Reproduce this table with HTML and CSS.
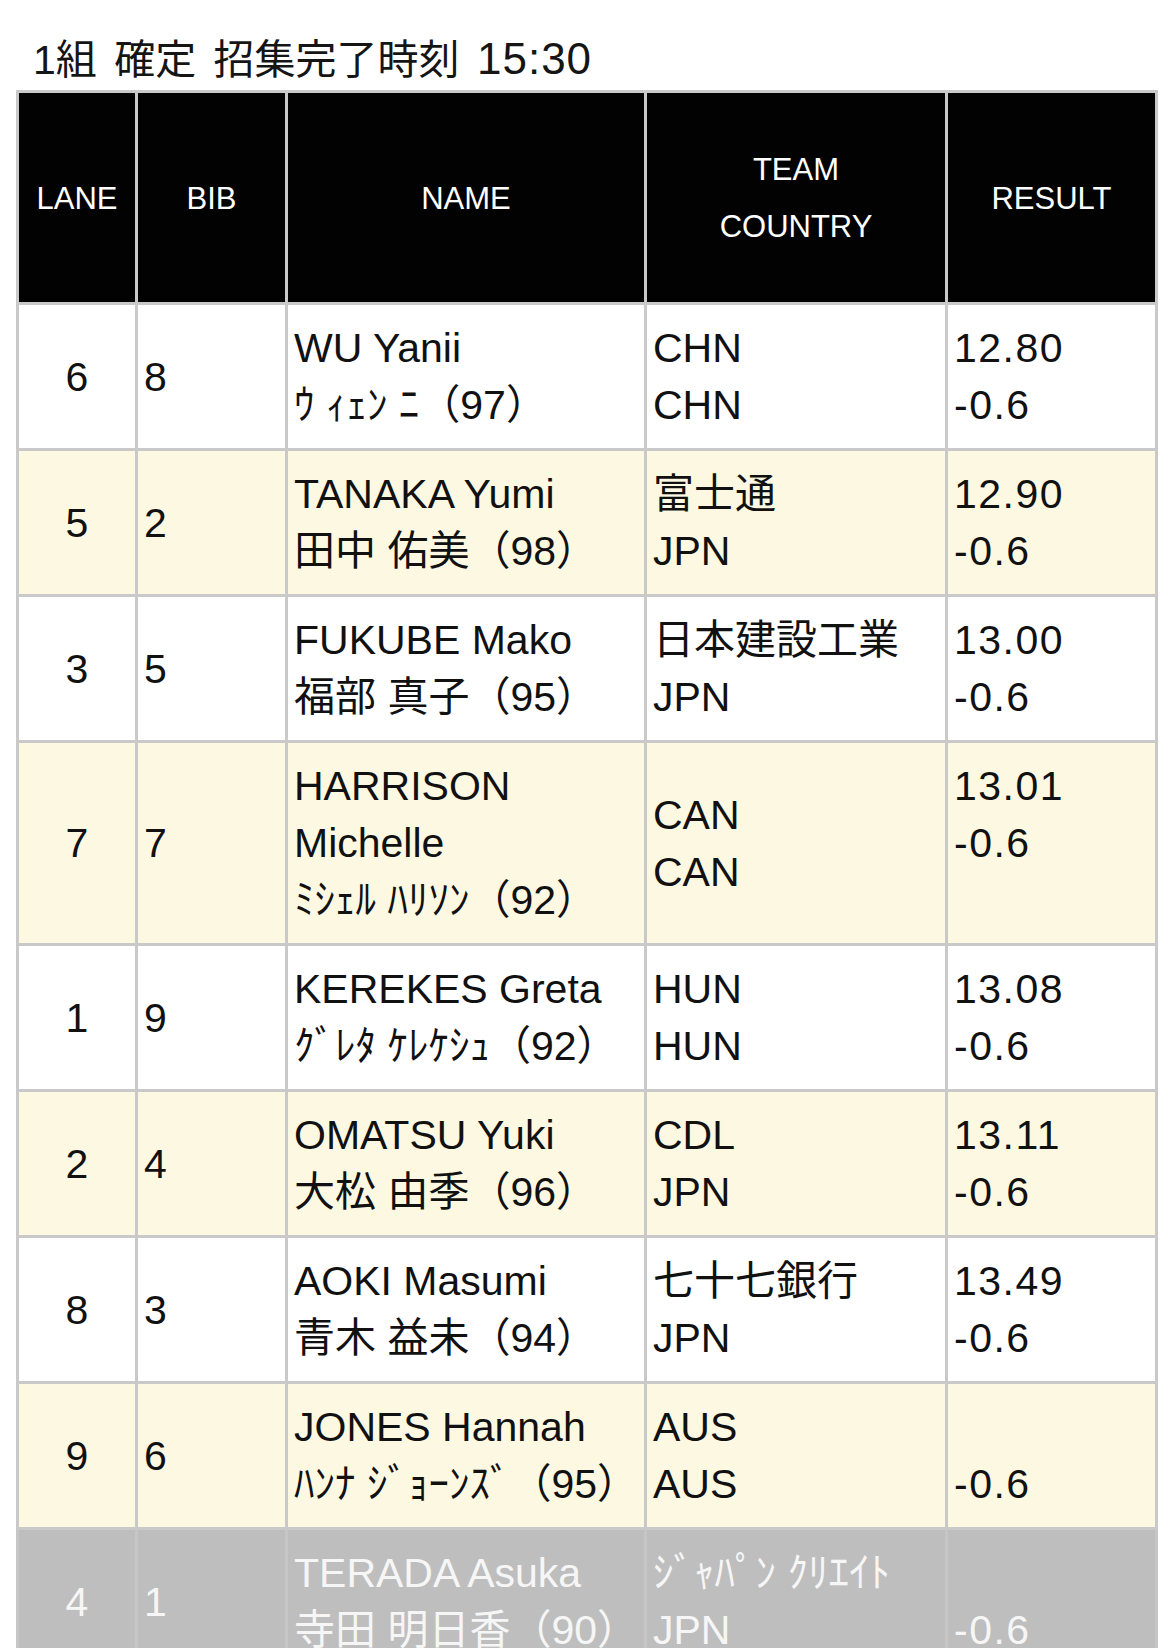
FILE: index.html
```html
<!DOCTYPE html>
<html lang="ja">
<head>
<meta charset="utf-8">
<title>1組 確定</title>
<link rel="stylesheet" href="styles.css">
</head>
<body>
<div class="page">
  <h1 class="title">1組 確定 招集完了時刻 <span class="time">15:30</span></h1>
  <table class="results">
    <colgroup>
      <col class="c-lane"><col class="c-bib"><col class="c-name"><col class="c-team"><col class="c-result">
    </colgroup>
    <thead>
      <tr>
        <th>LANE</th>
        <th>BIB</th>
        <th>NAME</th>
        <th>TEAM<br>COUNTRY</th>
        <th>RESULT</th>
      </tr>
    </thead>
    <tbody>
      <tr>
        <td class="lane">6</td><td class="bib">8</td>
        <td class="name">WU Yanii<br>ｳ ｨｪﾝ ﾆ（97）</td>
        <td class="team">CHN<br>CHN</td>
        <td class="result">12.80<br>-0.6</td>
      </tr>
      <tr class="alt">
        <td class="lane">5</td><td class="bib">2</td>
        <td class="name">TANAKA Yumi<br>田中 佑美（98）</td>
        <td class="team">富士通<br>JPN</td>
        <td class="result">12.90<br>-0.6</td>
      </tr>
      <tr>
        <td class="lane">3</td><td class="bib">5</td>
        <td class="name">FUKUBE Mako<br>福部 真子（95）</td>
        <td class="team">日本建設工業<br>JPN</td>
        <td class="result">13.00<br>-0.6</td>
      </tr>
      <tr class="alt">
        <td class="lane">7</td><td class="bib">7</td>
        <td class="name">HARRISON Michelle<br>ﾐｼｪﾙ ﾊﾘｿﾝ（92）</td>
        <td class="team">CAN<br>CAN</td>
        <td class="result">13.01<br>-0.6</td>
      </tr>
      <tr>
        <td class="lane">1</td><td class="bib">9</td>
        <td class="name">KEREKES Greta<br>ｸﾞﾚﾀ ｹﾚｹｼｭ（92）</td>
        <td class="team">HUN<br>HUN</td>
        <td class="result">13.08<br>-0.6</td>
      </tr>
      <tr class="alt">
        <td class="lane">2</td><td class="bib">4</td>
        <td class="name">OMATSU Yuki<br>大松 由季（96）</td>
        <td class="team">CDL<br>JPN</td>
        <td class="result">13.11<br>-0.6</td>
      </tr>
      <tr>
        <td class="lane">8</td><td class="bib">3</td>
        <td class="name">AOKI Masumi<br>青木 益未（94）</td>
        <td class="team">七十七銀行<br>JPN</td>
        <td class="result">13.49<br>-0.6</td>
      </tr>
      <tr class="alt">
        <td class="lane">9</td><td class="bib">6</td>
        <td class="name">JONES Hannah<br>ﾊﾝﾅ ｼﾞｮｰﾝｽﾞ（95）</td>
        <td class="team">AUS<br>AUS</td>
        <td class="result">&nbsp;<br>-0.6</td>
      </tr>
      <tr class="out">
        <td class="lane">4</td><td class="bib">1</td>
        <td class="name">TERADA Asuka<br>寺田 明日香（90）</td>
        <td class="team">ｼﾞｬﾊﾟﾝ ｸﾘｴｲﾄ<br>JPN</td>
        <td class="result">&nbsp;<br>-0.6</td>
      </tr>
    </tbody>
  </table>
</div>
</body>
</html>
```

FILE: styles.css
```css
html, body {
  margin: 0;
  padding: 0;
  background: #ffffff;
}

body {
  font-family: "Liberation Sans", "Noto Sans CJK JP", sans-serif;
  color: #111111;
}

.page {
  padding: 0 15px 0 16px;
}

.title {
  margin: 0;
  padding: 29px 0 0 17px;
  font-size: 41px;
  line-height: 60px;
  font-weight: normal;
  word-spacing: 6px;
  color: #151515;
}

.title .time {
  font-size: 44px;
  letter-spacing: 1px;
}

.results {
  border-collapse: collapse;
  table-layout: fixed;
  width: 1139px;
  font-size: 41px;
  line-height: 57px;
}

.c-lane { width: 119px; }
.c-bib { width: 150px; }
.c-name { width: 359px; }
.c-team { width: 301px; }
.c-result { width: 210px; }

.results th,
.results td {
  border: 3px solid #c9c9c9;
}

.results th {
  background: #020202;
  color: #ffffff;
  font-weight: normal;
  font-size: 31px;
  line-height: 57px;
  padding: 48px 4px 47px;
  text-align: center;
  vertical-align: middle;
}

.results td {
  padding: 15px 6px 14px;
  vertical-align: middle;
  text-align: left;
  white-space: nowrap;
}

.results td.name {
  white-space: normal;
}

.results td.lane {
  text-align: center;
}

.results td.result {
  vertical-align: top;
  letter-spacing: 1.5px;
}

.results tr.alt td {
  background: #fdf8e2;
}

.results tr.out td {
  background: #bebebe;
  color: #f6f6f6;
  border-color: #c6c6c6;
}
```
